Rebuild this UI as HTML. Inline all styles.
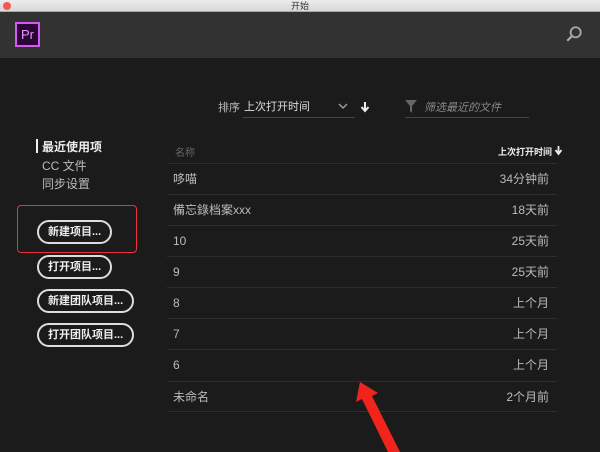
<!DOCTYPE html><html><head><meta charset="utf-8"><style>
*{margin:0;padding:0;box-sizing:border-box}
body{width:600px;height:452px;overflow:hidden;background:#1b1b1b;font-family:"Liberation Sans","Noto Sans CJK SC",sans-serif;color:#ccc;position:relative;font-size:12px}
.a{position:absolute}
.tb{left:0;top:0;width:600px;height:12px;background:linear-gradient(#ececec,#d8d8d8);font-size:9px;color:#333;text-align:center;line-height:12px;border-bottom:1px solid #aaa}
.hd{left:0;top:12px;width:600px;height:46px;background:#323232}
.btn{position:absolute;left:37px;height:24px;border:2px solid #ddd;border-radius:12px;color:#eee;font-weight:bold;font-size:11px;line-height:20px;padding:0 9px;white-space:nowrap}
.row{position:absolute;left:167px;width:390px;height:31px;border-top:1px solid #2e2e2e;line-height:30px;font-size:12px;color:#bbb}
.row span{position:absolute;right:8px}
.row b{font-weight:normal;position:absolute;left:6px}
</style></head><body>
<div class="a tb"><span class="a" style="left:3px;top:2px;width:8px;height:8px;border-radius:50%;background:#f25b55"></span>开始</div>
<div class="a hd">
<div class="a" style="left:15px;top:10px;width:25px;height:25px;background:#2a0634;border:2px solid #d35bf4;color:#e59bfb;font-size:13px;line-height:21px;text-align:center">Pr</div>
<svg class="a" style="left:565px;top:13px" width="18" height="18" viewBox="0 0 16 16"><circle cx="9.5" cy="6.5" r="4.5" fill="none" stroke="#aaa" stroke-width="1.6"/><path d="M6.3 9.7L2 14" stroke="#aaa" stroke-width="2"/></svg>
</div>
<div class="a" style="left:218px;top:99px;color:#bbb;font-size:11px">排序</div>
<div class="a" style="left:244px;top:98px;color:#ddd;font-size:11px">上次打开时间</div>
<div class="a" style="left:243px;top:117px;width:112px;height:1px;background:#444"></div>
<svg class="a" style="left:338px;top:102px" width="10" height="8"><path d="M1 2l4 4 4-4" fill="none" stroke="#999" stroke-width="1.5"/></svg>
<svg class="a" style="left:360px;top:101px" width="10" height="12"><path d="M5 1v8M1.5 6L5 10 8.5 6" fill="none" stroke="#eee" stroke-width="2"/></svg>
<svg class="a" style="left:405px;top:100px" width="12" height="13"><path d="M0 0h12L7 6v7L5 11V6z" fill="#666"/></svg>
<div class="a" style="left:424px;top:99px;color:#888;font-style:italic;font-size:11px">筛选最近的文件</div>
<div class="a" style="left:405px;top:117px;width:124px;height:1px;background:#444"></div>
<div class="a" style="left:36px;top:139px;width:2px;height:14px;background:#eee"></div>
<div class="a" style="left:42px;top:138px;color:#eee;font-weight:bold">最近使用项</div>
<div class="a" style="left:42px;top:157px;color:#bbb">CC 文件</div>
<div class="a" style="left:42px;top:175px;color:#bbb">同步设置</div>
<div class="a" style="left:17px;top:205px;width:120px;height:48px;border:1.5px solid #e8333d;border-radius:4px"></div>
<div class="btn" style="top:220px">新建项目...</div>
<div class="btn" style="top:255px">打开项目...</div>
<div class="btn" style="top:289px">新建团队项目...</div>
<div class="btn" style="top:323px">打开团队项目...</div>
<div class="a" style="left:175px;top:144px;color:#666;font-size:10px">名称</div>
<div class="a" style="left:498px;top:145px;color:#eee;font-size:9px;font-weight:bold">上次打开时间</div>
<svg class="a" style="left:554px;top:145px" width="9" height="11"><path d="M4.5 1v7M1.5 5L4.5 9 7.5 5" fill="none" stroke="#eee" stroke-width="1.8"/></svg>
<div class="row" style="top:163px"><b>哆喵</b><span>34分钟前</span></div>
<div class="row" style="top:194px"><b>備忘錄档案xxx</b><span>18天前</span></div>
<div class="row" style="top:225px"><b>10</b><span>25天前</span></div>
<div class="row" style="top:256px"><b>9</b><span>25天前</span></div>
<div class="row" style="top:287px"><b>8</b><span>上个月</span></div>
<div class="row" style="top:318px"><b>7</b><span>上个月</span></div>
<div class="row" style="top:349px"><b>6</b><span>上个月</span></div>
<div class="row" style="top:381px;border-bottom:1px solid #2e2e2e"><b>未命名</b><span>2个月前</span></div>
<svg class="a" style="left:0;top:0" width="600" height="452"><path d="M360 382L378 393 372 396 400 452 388 452 362 399 356 402Z" fill="#f0241a"/></svg>
</body></html>
